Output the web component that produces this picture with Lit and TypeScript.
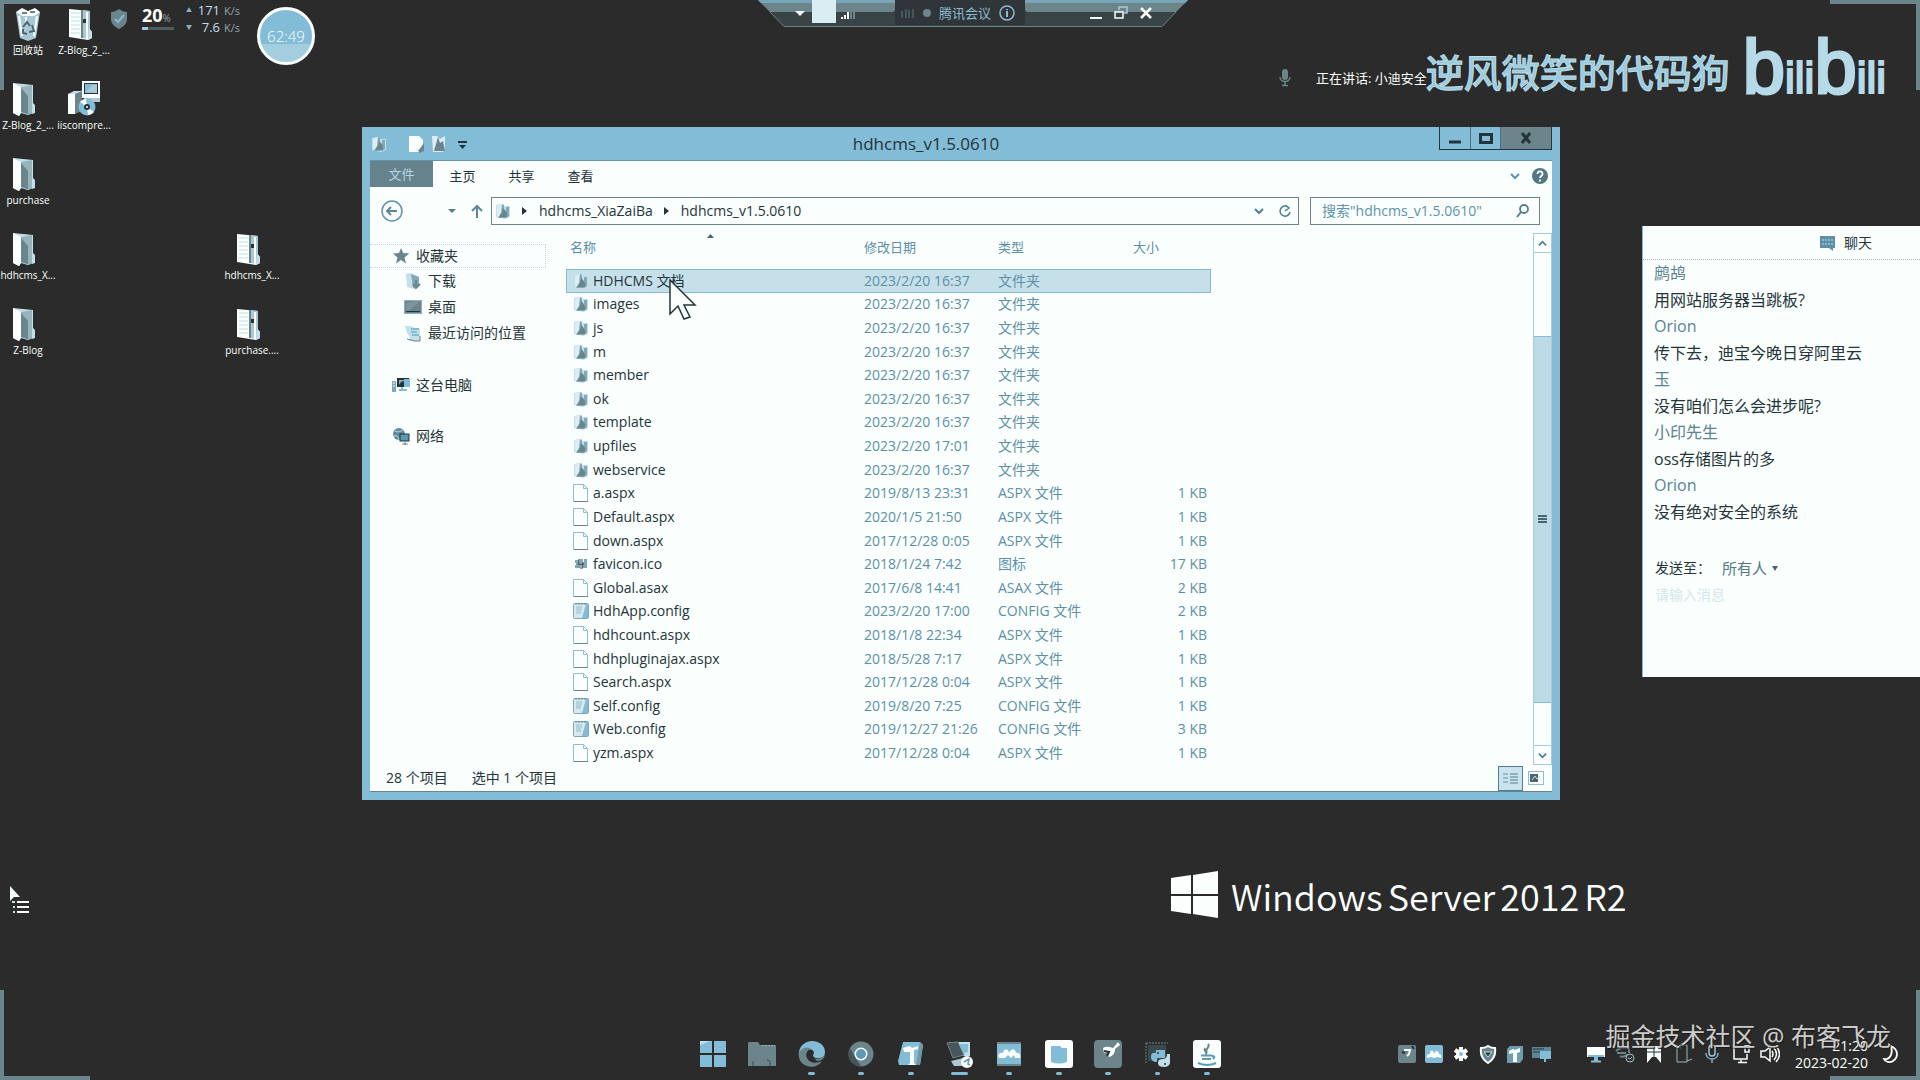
import { LitElement, html, css, svg, nothing } from "lit";
import { customElement } from "lit/decorators.js";
import { classMap } from "lit/directives/class-map.js";

const BLUE = "#82bcd6";
const SLATE = "#6b858a";
const PALE = "#fafffd";
const MIST = "#c3dfea";
const INK = "#24343a";

/* ---------- icons ---------- */

const frame = (w: number, h: number, vw: number, vh: number, body: unknown) =>
  html`<svg width=${w} height=${h} viewBox="0 0 ${vw} ${vh}" fill="none" aria-hidden="true">${body}</svg>`;

const bigFolder = () =>
  frame(32, 34, 32, 34, svg`
    <path d="M1 1 L21 3 V22 L23 24 V30 L16 33 L9 31 L7 34 L1 31 Z" fill="${MIST}"/>
    <path d="M1 1 L9 5 V31 L7 34 L1 31 Z" fill="${PALE}"/>
    <path d="M9 5 L20 3 V22 L23 24 V30 L16 33 L9 30 Z" fill="#96b4bb"/>
    <path d="M9 6 L16 14 V32 L9 30 Z" fill="${SLATE}"/>
    <path d="M20 20 l3 3 v8 l-3 1z" fill="${MIST}"/>`);

const zipFolder = () =>
  frame(32, 34, 32, 34, svg`
    <path d="M1 2 L22 4 V23 L24 25 V31 L20 33 L1 30 Z" fill="${PALE}"/>
    <path d="M3 6h9M3 10h9M3 14h9M3 18h9M3 22h9M3 26h9" stroke="${MIST}"/>
    <path d="M13 3 L22 4 V32 L13 31 Z" fill="#a9c8d2"/>
    <path d="M14 3v28" stroke="${SLATE}" stroke-width="2"/>
    <rect x="15" y="12" width="3" height="4" fill="${INK}"/>
    <path d="M19 5v27" stroke="${PALE}" stroke-width="2"/>
    <path d="M21 21 l3 4 v6 l-4 2z" fill="${MIST}"/>`);

const recycleBin = () =>
  frame(28, 34, 28, 34, svg`
    <path d="M2 5 L26 5 L22 31 L14 34 L6 31 Z" fill="#a7c9d6"/>
    <path d="M2 5 L8 1 L14 4 L21 1 L26 5 L20 9 L8 9 Z" fill="${PALE}"/>
    <path d="M5 9l3 20M23 9l-3 20M12 10v6" stroke="${PALE}" stroke-width="2"/>
    <path d="M9 20l4-5 3 4M18 18l2 6-5 1M13 27l-4-1 0-4" stroke="#4d666f" stroke-width="2"/>
    <path d="M8 6h5M16 5h5" stroke="${SLATE}" stroke-width="2"/>`);

const installer = () =>
  frame(34, 36, 34, 36, svg`
    <rect x="15" y="1" width="18" height="17" fill="${PALE}"/>
    <rect x="17" y="3" width="14" height="11" fill="${INK}"/>
    <rect x="18" y="4" width="12" height="9" fill="${BLUE}"/>
    <path d="M19 12l6-7h5v8z" fill="#a9cbd6"/>
    <path d="M17 18h16v4H17z" fill="#a9c8d2"/>
    <path d="M1 14h7v20H1z" fill="${PALE}"/><path d="M8 13l7-3v21l-7 3z" fill="${SLATE}"/>
    <path d="M1 14l6-3h8l-7 3z" fill="${MIST}"/>
    <circle cx="20" cy="27" r="8.500" fill="${BLUE}"/>
    <path d="M20 27L13 22a8 8 0 0 1 6-3zM20 27l7 5a8 8 0 0 1-6 3z" fill="${PALE}"/>
    <circle cx="20" cy="27" r="3" fill="${INK}"/><circle cx="20" cy="27" r="1" fill="${PALE}"/>`);

const folder = () =>
  frame(16, 16, 16, 16, svg`
    <path d="M1 2l5-1 3 2 6 0v11l-5 2-9-2z" fill="${MIST}"/>
    <path d="M2 3l5-2v8l-4 5-1-1z" fill="#dceef3"/>
    <path d="M7 1l2 1v4l2 2 0-4 3 0v9l-3 2H3l3-5z" fill="#7fa9b8"/>
    <path d="M8 5l4 5v4H4l3-4z" fill="${SLATE}"/>`);

const page = () =>
  frame(16, 18, 16, 18, svg`
    <path d="M.5.5h10l4 4v13H.5z" fill="${PALE}" stroke="#93bccb"/>
    <path d="M10.500 .5v4h4" stroke="#93bccb"/><path d="M1 17.500h14" stroke="${SLATE}"/>`);

const config = () =>
  frame(16, 18, 16, 18, svg`
    <rect x=".5" y="1.500" width="15" height="15" rx="1" fill="#d5e9ef" stroke="#7fa9b8"/>
    <path d="M9 16l4-14h2v14z" fill="${BLUE}"/>
    <path d="M3 5h6M3 7h6M3 9h5M3 11h5" stroke="#93bccb"/>
    <path d="M3 1v2M6 1v2M9 1v2M12 1v2" stroke="${SLATE}"/>`);

const ico = () =>
  frame(14, 12, 14, 12, svg`
    <path d="M1 2h4v3H1zM6 1h3v4H6zM10 1h3v9h-3zM1 7h3v3H1zM6 6h3v5H6z" fill="#7fa9b8"/>
    <path d="M2 6h8M5 1v9M9 4v6" stroke="${INK}"/>`);

const star = () =>
  frame(18, 18, 18, 18, svg`
    <path d="M9 1l2 5 6 .5-4.500 4 1.500 6L9 13l-5 3.500 1.500-6L1 6.500 7 6z" fill="${SLATE}"/>
    <path d="M9 1l2 5 6 .5-4 3z" fill="#5b98b4"/>`);

const download = () =>
  frame(18, 18, 18, 18, svg`
    <path d="M2 2l5-1 8 4v10l-5 2-7-2z" fill="${MIST}"/>
    <path d="M7 2l8 3v9l-6 2z" fill="#7fa9b8"/>
    <path d="M12 8v7M9 12l3 4 4-4" stroke="${SLATE}" stroke-width="2"/>`);

const desktopIcon = () =>
  frame(18, 16, 18, 16, svg`
    <rect x=".5" y="1.500" width="17" height="13" fill="${SLATE}" stroke="#8fb0b9"/>
    <path d="M2 4l10-2h4L4 13H2z" fill="#7b969c"/><path d="M2 12.500h14" stroke="${INK}"/>`);

const recent = () =>
  frame(18, 18, 18, 18, svg`
    <path d="M1 2h6l5 3 4 0v12H5l1-4-3-4z" fill="${MIST}"/>
    <path d="M7 5h8M7 8h6M8 11h7" stroke="${BLUE}" stroke-width="2"/>
    <path d="M3 15l8 2 5 0v-5" stroke="${SLATE}"/>`);

const computer = () =>
  frame(18, 16, 18, 16, svg`
    <rect x="0" y="4" width="4" height="11" fill="#7fa9b8"/><path d="M1 6h2M1 9h2" stroke="${PALE}"/>
    <rect x="5" y="1" width="12" height="9" fill="${INK}"/><path d="M7 8V3h8L9 5z" fill="#8fb0b9"/>
    <rect x="12" y="2" width="6" height="8" fill="${BLUE}"/><path d="M7 13h8M10 10v3" stroke="${BLUE}" stroke-width="2"/>`);

const network = () =>
  frame(18, 18, 18, 18, svg`
    <circle cx="7" cy="7" r="6" fill="#5f8c9d"/><path d="M3 4c3 2 6 0 8-1M2 9c3-1 5 1 5 4" stroke="${MIST}"/>
    <rect x="8" y="7" width="9" height="7" fill="#5b98b4" stroke="${INK}"/><path d="M13 14v4M10 17h6" stroke="${SLATE}"/>`);

const chevron = (w: number, up = false, colour = "#4f7f93") =>
  frame(w, w, 10, 10, svg`<path d=${up ? "M1 7l4-4 4 4" : "M1 3l4 4 4-4"} stroke=${colour} stroke-width="2"/>`);

const winLogo = () =>
  frame(48, 48, 48, 48, svg`
    <path d="M0 7l20-3v19H0zM22 4l25-4v23H22zM0 25h20v18L0 40zM22 25h25v22l-25-4z" fill="${PALE}"/>`);

const micSmall = () =>
  frame(12, 18, 12, 18, svg`
    <rect x="3" y="0" width="6" height="11" rx="3" fill="${SLATE}"/>
    <path d="M1 8c0 6 10 6 10 0M6 13v4M3 16.500h6" stroke="${SLATE}" stroke-width="1.500"/>`);

const shieldBadge = () =>
  frame(16, 20, 16, 20, svg`
    <path d="M8 0c3 2 5 3 8 3v7c0 5-4 8-8 10-4-2-8-5-8-10V3c3 0 5-1 8-3z" fill="${SLATE}"/>
    <path d="M4 10l3 3 6-7" stroke="${BLUE}" stroke-width="2"/>`);

/* taskbar */
const tb = (body: unknown) => frame(28, 28, 28, 28, body);
const taskIcons: { name: string; mark: number; art: unknown }[] = [
  { name: "开始", mark: 0, art: tb(svg`<path d="M1 1h12v12H1zM15 1h12v12H15zM1 15h12v12H1zM15 15h12v12H15z" fill="${BLUE}"/><path d="M1 1h10L1 5z" fill="${MIST}"/>`) },
  { name: "文件资源管理器", mark: 0, art: tb(svg`<path d="M0 3q0-1 1-1h9l2 3h15q1 0 1 1v20H0z" fill="${SLATE}"/><path d="M5 26v-5M22 26v-4q0-2-3-2" stroke="#3b494d"/><path d="M14 5.500h13" stroke="#a3b9bf" stroke-dasharray="2 1"/>`) },
  { name: "Edge", mark: 7, art: tb(svg`<path d="M14 1c8 0 13 5 13 11 0 5-4 7-9 6-4-1-3-3-2-5 0-3-4-5-8-3-4 2-4 8-1 12C2 20 0 15 1 12 2 5 8 1 14 1z" fill="${BLUE}"/><path d="M1 13c2-5 8-7 12-4-4 1-6 5-4 9 2 5 9 6 15 3-3 5-10 7-15 5C3 24 0 19 1 13z" fill="${SLATE}"/><path d="M16 18c4 2 9 1 11-5 0 5-3 8-8 8z" fill="${SLATE}"/>`) },
  { name: "Chrome", mark: 6, art: tb(svg`<circle cx="14" cy="14" r="12.500" fill="${SLATE}"/><path d="M3 8L9 19l5 7A12 12 0 0 1 3 8z" fill="#465559"/><circle cx="14" cy="14" r="6.500" fill="${PALE}"/><circle cx="14" cy="14" r="5" fill="#5d9ab6"/>`) },
  { name: "Typora", mark: 6, art: tb(svg`<path d="M6 2h17l3 3-3 20H2L1 21z" fill="${BLUE}"/><path d="M23 2l3 3-3 20h-4z" fill="#7397a3"/><path d="M6 8l6-2 2 1 1 1 6-2v3l-4 1v13l2 2h-8l2-2V12l-6 0z" fill="${PALE}"/>`) },
  { name: "远程桌面", mark: 17, art: tb(svg`<path d="M3 2l21 0v14H6z" fill="${MIST}"/><path d="M1 3l11-1 6 13-11 3z" fill="#46565b" stroke="${SLATE}"/><path d="M13 4h9v8l-5 1z" fill="${BLUE}"/><path d="M5 21l12-3 3 8H8z" fill="#a9c8d2"/><circle cx="21" cy="22" r="6" fill="${PALE}"/><path d="M18 22l5-3-1 5 2 1" stroke="#5d9ab6" stroke-width="1.500"/>`) },
  { name: "思维导图", mark: 6, art: tb(svg`<path d="M2 2h24v24H2z" fill="${BLUE}"/><path d="M2 2h24v2H2zM2 24h24v2H2z" fill="${SLATE}"/><path d="M4 18c-2-4 1-6 4-5 1-5 5-5 6 0 2-5 6-5 7 0 3-1 5 2 4 5l-5 0-1-3-3 3-3-3-3 3z" fill="${PALE}"/>`) },
  { name: "虚拟机", mark: 6, art: tb(svg`<rect width="28" height="28" rx="3" fill="${PALE}"/><path d="M6 6h9l2 2h5v14q-8 3-16 0z" fill="${BLUE}"/>`) },
  { name: "飞鸟", mark: 6, art: tb(svg`<rect width="28" height="28" rx="4" fill="${SLATE}"/><path d="M9 8c3-2 6-1 10 0l5-6 2 3-5 4c0 4-2 7-6 8l-2-2 3-3-6 1z" fill="${PALE}"/><path d="M10 11l5 1-2 4" stroke="${INK}" stroke-width="2"/>`) },
  { name: "Python", mark: 5, art: tb(svg`<path d="M2 3h22M2 3v20" stroke="${SLATE}" stroke-dasharray="2 1"/><path d="M4 5h18v16H4z" fill="#3c494d"/><path d="M12 10h9v8h-8v4q-6 0-6-5t5-4z" fill="${BLUE}"/><path d="M26 14v9q-1 4-6 4-6 0-6-4 0-4 5-4 4 0 4-5z" fill="${MIST}"/><circle cx="14" cy="13" r="1" fill="${INK}"/><circle cx="21" cy="24" r="1" fill="${INK}"/>`) },
  { name: "Java", mark: 6, art: tb(svg`<rect width="28" height="28" rx="3" fill="${PALE}"/><path d="M15 4c3 3-4 5-1 9M12 8c-2 3 3 4 1 7" stroke="${SLATE}" stroke-width="2"/><path d="M8 15.500h11M9 19h9M5 23q9 4 18 0M19 16q4 0 1 3" stroke="#5d9ab6" stroke-width="2"/>`) },
];

/* tray */
const tr = (body: unknown) => frame(20, 20, 20, 20, body);
const trayLeft: [string, unknown][] = [
  ["助手", tr(svg`<rect x="1" y="1" width="18" height="18" rx="2" fill="${SLATE}"/><path d="M7 6h6l-1 4-2 2" stroke="${PALE}" stroke-width="2"/><path d="M5 8l3 1M15 2l2 3" stroke="${INK}" stroke-width="2"/>`)],
  ["思维导图", tr(svg`<rect x="1" y="1" width="18" height="18" rx="2" fill="${BLUE}"/><path d="M3 14c-1-4 2-4 3-4 0-5 4-4 4 0 1-4 5-4 5 0 2 0 3 2 2 4l-4-1-3 1-3-1z" fill="${PALE}"/>`)],
  ["设置", tr(svg`<path d="M10 3v14M4 6l12 8M4 14l12-8" stroke="${PALE}" stroke-width="4"/><circle cx="10" cy="10" r="5" fill="${PALE}"/><circle cx="10" cy="10" r="2" fill="${BLUE}"/>`)],
  ["安全中心", tr(svg`<path d="M10 2c3 2 5 2 7 2 1 7-2 12-7 15C5 16 2 11 3 4c2 0 4 0 7-2z" fill="${SLATE}" stroke="${PALE}" stroke-width="2"/><path d="M6 8l4 5 4-5z" fill="${INK}" stroke="${MIST}"/>`)],
  ["Typora", tr(svg`<path d="M5 2h13v13l-3 4H2V5z" fill="#6f9dae"/><path d="M4 7l4-2 2 1 5-2v4l-3 1v9H8v-9l-4 1z" fill="${PALE}"/>`)],
  ["显示", tr(svg`<path d="M0 3h19v11H0z" fill="#5d8796"/><path d="M1 5h11M1 8h7" stroke="${INK}"/><path d="M9 8h9v6H9zM13 14v4" stroke="${BLUE}" fill="${BLUE}" stroke-width="2"/>`)],
];
const trayRight: [string, unknown][] = [
  ["投屏", tr(svg`<path d="M1 3h18v10H1z" fill="${PALE}"/><path d="M8 13h4v4H8z" fill="${BLUE}"/><path d="M5 17.500h10M2 12h16" stroke="${BLUE}" stroke-width="2"/>`)],
  ["同步", tr(svg`<path d="M1 7c5-5 9-3 13-3v5M2 9h9M5 12c3 2 5 0 7-1" stroke="${SLATE}" stroke-width="2"/><circle cx="15" cy="14" r="4" stroke="#a9c0c6"/><path d="M13 14l2 1 2-2" stroke="#a9c0c6"/>`)],
  ["书签", tr(svg`<path d="M3 2h14v17l-5-6h-4l-5 6z" fill="${PALE}"/><path d="M3 8h14M10 2v11" stroke="${INK}"/>`)],
  ["便签", tr(svg`<path d="M4 4l3-3h7v17H4zM14 17l5-2" stroke="#9fb9c0"/><path d="M7 2v3" stroke="${SLATE}"/>`)],
  ["麦克风", tr(svg`<rect x="7" y="1" width="6" height="11" rx="3" stroke="#9fc4d1" stroke-width="1.500"/><path d="M4 9c0 8 12 8 12 0M10 15v4" stroke="#7fb0c2" stroke-width="1.500"/>`)],
  ["网络", tr(svg`<path d="M12 3H3v12h13v-5M7 18.500h9M10 16v2M14 2h4v6h-4z" stroke="${PALE}" stroke-width="1.500"/>`)],
  ["音量", tr(svg`<path d="M1 7h4l5-4v14l-5-4H1zM12 7q2 3 0 6M14 4q5 6 0 12M16 2q7 8 0 16" stroke="${PALE}" stroke-width="1.500"/>`)],
];

/* ---------- data ---------- */

type Kind = "folder" | "page" | "config" | "ico";
const D = "文件夹", A = "ASPX 文件", C = "CONFIG 文件";
const files: [Kind, string, string, string, string][] = [
  ["folder", "HDHCMS 文档", "2023/2/20 16:37", D, ""],
  ["folder", "images", "2023/2/20 16:37", D, ""],
  ["folder", "js", "2023/2/20 16:37", D, ""],
  ["folder", "m", "2023/2/20 16:37", D, ""],
  ["folder", "member", "2023/2/20 16:37", D, ""],
  ["folder", "ok", "2023/2/20 16:37", D, ""],
  ["folder", "template", "2023/2/20 16:37", D, ""],
  ["folder", "upfiles", "2023/2/20 17:01", D, ""],
  ["folder", "webservice", "2023/2/20 16:37", D, ""],
  ["page", "a.aspx", "2019/8/13 23:31", A, "1 KB"],
  ["page", "Default.aspx", "2020/1/5 21:50", A, "1 KB"],
  ["page", "down.aspx", "2017/12/28 0:05", A, "1 KB"],
  ["ico", "favicon.ico", "2018/1/24 7:42", "图标", "17 KB"],
  ["page", "Global.asax", "2017/6/8 14:41", "ASAX 文件", "2 KB"],
  ["config", "HdhApp.config", "2023/2/20 17:00", C, "2 KB"],
  ["page", "hdhcount.aspx", "2018/1/8 22:34", A, "1 KB"],
  ["page", "hdhpluginajax.aspx", "2018/5/28 7:17", A, "1 KB"],
  ["page", "Search.aspx", "2017/12/28 0:04", A, "1 KB"],
  ["config", "Self.config", "2019/8/20 7:25", C, "1 KB"],
  ["config", "Web.config", "2019/12/27 21:26", C, "3 KB"],
  ["page", "yzm.aspx", "2017/12/28 0:04", A, "1 KB"],
];
const kindIcon = { folder, page, config, ico };

const chat: [string, string][] = [
  ["鹧鸪", "用网站服务器当跳板?"],
  ["Orion", "传下去，迪宝今晚日穿阿里云"],
  ["玉", "没有咱们怎么会进步呢?"],
  ["小印先生", "oss存储图片的多"],
  ["Orion", "没有绝对安全的系统"],
];

const base = css`
  * { box-sizing: border-box; }
  svg { display: block; flex: none; }
  button, input, select, textarea {
    font: inherit; color: inherit; background: none; border: 0; padding: 0; margin: 0;
    border-radius: 0; outline: 0; appearance: none;
  }
  button { display: flex; align-items: center; justify-content: center; }
  a { color: inherit; text-decoration: none; }
  ul, p, h1, h2 { margin: 0; padding: 0; list-style: none; font-weight: 400; }
`;

/* ---------- file explorer window ---------- */

@customElement("file-explorer")
class FileExplorer extends LitElement {
  static styles = [base, css`
    :host {
      display: flex; flex-direction: column; background: #82bcd6; padding: 0 8px 8px;
      font-size: 14px; line-height: 20px; color: #24343a;
    }
    .title { display: grid; grid-template-columns: 1fr auto 1fr; align-items: center; height: 34px; border-bottom: 1px solid #6b95a5; }
    .quick { display: flex; align-items: center; gap: 7px; padding-left: 1px; }
    .quick .new { margin-left: 14px; }
    .title h1 { font-size: 17px; line-height: 24px; color: #24343a; padding-right: 70px; }
    .caption { display: flex; justify-self: end; align-self: start; height: 23px; border: 1px solid #24343a; border-top: 0; }
    .caption button { width: 30px; }
    .caption button + button { border-left: 1px solid #4f7080; }
    .caption .close { width: 51px; background: #6b858a; }
    .content { flex: 1; display: flex; flex-direction: column; background: #fafffd; min-height: 0; border-bottom: 1px solid #6b858a; }
    .tabs { display: flex; align-items: center; height: 29px; font-size: 13px; }
    .tabs button { height: 28px; width: 59px; }
    .tabs .file { width: 63px; height: 26px; align-self: start; background: #65838d; color: #b4d7e4; }
    .tabs .fold { width: 24px; margin-left: auto; }
    .tabs .help { width: 25px; }
    .bar { display: flex; align-items: center; height: 41px; padding: 0 12px 0 11px; }
    .bar .hist { width: 14px; margin-left: 42px; }
    .bar .up { width: 16px; margin: 0 6px 0 10px; }
    .path { flex: 1; display: flex; align-items: center; gap: 11px; height: 28px; border: 1px solid #6b858a; padding: 0 6px 0 3px; }
    .path .end { margin-left: auto; width: 16px; }
    .search { display: flex; align-items: center; width: 230px; height: 28px; margin-left: 11px; border: 1px solid #6b858a; padding: 0 9px 0 11px; }
    .search input { flex: 1; min-width: 0; }
    .search input::placeholder { color: #5d93ac; opacity: 1; }
    .body { flex: 1; display: flex; min-height: 0; }
    .side { width: 196px; padding: 13px 20px 0 0; }
    .side a { display: flex; align-items: center; gap: 6px; height: 26px; padding-left: 22px; white-space: nowrap; }
    .side .sub a { padding-left: 34px; }
    .side .fav { height: 24px; border: 1px dotted #b9d7e2; border-left: 0; }
    .side .group { margin-top: 26px; }
    .side .group + .group { margin-top: 25px; }
    .list { flex: 1; display: flex; align-items: start; }
    table { border-collapse: collapse; table-layout: fixed; width: 645px; height: 100%; color: #5d8fa6; }
    th { font-weight: 400; font-size: 13px; text-align: left; padding: 0 0 6px; height: 38px; }
    th.name { padding-left: 4px; position: relative; }
    td { padding: 0; white-space: nowrap; line-height: 20px; }
    td.name { color: #24343a; padding-left: 7px; }
    .cell { display: flex; align-items: center; gap: 4px; }
    .cell .pic { display: flex; width: 16px; justify-content: center; }
    td.size { text-align: right; padding-right: 4px; }
    tr.on { background: #c6e0ea; outline: 1px solid #82bcd6; outline-offset: -1px; }
    .c1 { width: 298px; } .c2 { width: 134px; } .c3 { width: 135px; }
    .sort { position: absolute; left: 141px; top: 3px; }
    .scroll { display: flex; flex-direction: column; width: 19px; margin: 2px 0 0; border: 1px solid #a6cddd; }
    .scroll button { height: 18px; }
    .track { flex: 1; display: flex; flex-direction: column; padding: 83px 0 42px; border: solid #a6cddd; border-width: 1px 0; }
    .thumb { flex: 1; display: flex; align-items: center; justify-content: center; background: #bcdbe7; border: solid #82bcd6; border-width: 1px 0; }
    .status { display: flex; align-items: center; gap: 24px; height: 26px; padding: 0 8px 0 16px; }
    .views { display: flex; align-items: center; gap: 5px; margin-left: auto; }
    .views .on { width: 25px; height: 25px; border: 1px solid #4f7f93; background: #cbe3ec; }
  `];

  render() {
    return html`
      <header class="title">
        <div class="quick">
          ${folder()}
          <button class="new" aria-label="属性">${frame(16, 18, 16, 18, svg`<path d="M1 1h10l4 4v12H1z" fill="${PALE}"/><path d="M7 12l3 4 6-8v8l-4 2z" fill="${SLATE}"/>`)}</button>
          <button aria-label="新建文件夹">${frame(16, 18, 16, 18, svg`<path d="M1 1l5 0 3 3 5-3v15l-4 1H2z" fill="#dceef3"/><path d="M7 2l2 6 3-2 2 10H3z" fill="${SLATE}"/>`)}</button>
          <button aria-label="自定义">${frame(16, 12, 16, 12, svg`<path d="M4 4h9" stroke="${INK}" stroke-width="2"/><path d="M5 7h7L8.500 11z" fill="${INK}"/>`)}</button>
        </div>
        <h1>hdhcms_v1.5.0610</h1>
        <div class="caption">
          <button aria-label="最小化">${frame(14, 12, 14, 12, svg`<path d="M1 10h12" stroke="${INK}" stroke-width="3"/>`)}</button>
          <button aria-label="最大化">${frame(14, 12, 14, 12, svg`<rect x="1.500" y="2.500" width="11" height="8" stroke="${INK}" stroke-width="3"/>`)}</button>
          <button class="close" aria-label="关闭">${frame(12, 12, 12, 12, svg`<path d="M2 1l8 10M10 1L2 11" stroke="${INK}" stroke-width="3"/>`)}</button>
        </div>
      </header>
      <div class="content">
        <nav class="tabs">
          <button class="file">文件</button><button>主页</button><button>共享</button><button>查看</button>
          <button class="fold" aria-label="展开功能区">${chevron(10, false, "#5d93ac")}</button>
          <button class="help" aria-label="帮助">${frame(16, 16, 16, 16, svg`<circle cx="8" cy="8" r="8" fill="#557784"/><path d="M5.500 6c0-4 5-3 5 0 0 2-2.500 2-2.500 4M8 11.500v2" stroke="${PALE}" stroke-width="1.800"/>`)}</button>
        </nav>
        <div class="bar">
          <button aria-label="后退">${frame(22, 22, 22, 22, svg`<circle cx="11" cy="11" r="10" stroke="#5d93ac" stroke-width="1.500"/><path d="M16 11H7M10 7l-4 4 4 4" stroke="#5d8796" stroke-width="2"/>`)}</button>
          <button class="hist" aria-label="最近位置">${frame(8, 6, 8, 6, svg`<path d="M0 1h8L4 5z" fill="#4f7f93"/>`)}</button>
          <button class="up" aria-label="上移">${frame(12, 14, 12, 14, svg`<path d="M6 14V2M1 7l5-5 5 5" stroke="#5d8796" stroke-width="2"/>`)}</button>
          <div class="path">
            ${folder()}
            ${frame(6, 8, 6, 8, svg`<path d="M0 0v8l5-4z" fill="${INK}"/>`)}
            <a href="#p">hdhcms_XiaZaiBa</a>
            ${frame(6, 8, 6, 8, svg`<path d="M0 0v8l5-4z" fill="${INK}"/>`)}
            <a href="#c">hdhcms_v1.5.0610</a>
            <button class="end" aria-label="历史记录">${chevron(10)}</button>
            <button aria-label="刷新">${frame(14, 14, 14, 14, svg`<path d="M11 4a5 5 0 1 0 1 4M7 1l4 3-4 3" stroke="#4f7f93" stroke-width="1.500"/>`)}</button>
          </div>
          <label class="search">
            <input type="search" aria-label="搜索" placeholder='搜索"hdhcms_v1.5.0610"' />
            ${frame(14, 14, 14, 14, svg`<circle cx="8" cy="5" r="4" stroke="#4f7f93" stroke-width="1.800"/><path d="M5 8l-4 5" stroke="#4f7f93" stroke-width="2"/>`)}
          </label>
        </div>
        <div class="body">
          <nav class="side">
            <a class="fav" href="#fav">${star()}收藏夹</a>
            <div class="sub">
              <a href="#dl">${download()}下载</a>
              <a href="#dt">${desktopIcon()}桌面</a>
              <a href="#rc">${recent()}最近访问的位置</a>
            </div>
            <a class="group" href="#pc">${computer()}这台电脑</a>
            <a class="group" href="#nt">${network()}网络</a>
          </nav>
          <div class="list">
            <table>
              <colgroup><col class="c1" /><col class="c2" /><col class="c3" /><col /></colgroup>
              <thead>
                <tr>
                  <th class="name" aria-sort="ascending">名称<span class="sort">${frame(7, 4, 7, 4, svg`<path d="M0 4l3.500-4L7 4z" fill="#4a656e"/>`)}</span></th>
                  <th>修改日期</th><th>类型</th><th>大小</th>
                </tr>
              </thead>
              <tbody>
                ${files.map(([kind, name, date, type, size], i) => html`
                  <tr class=${classMap({ on: i === 0 })}>
                    <td class="name"><span class="cell"><span class="pic">${kindIcon[kind]()}</span>${name}</span></td>
                    <td>${date}</td><td>${type}</td><td class="size">${size}</td>
                  </tr>`)}
              </tbody>
            </table>
          </div>
          <div class="scroll">
            <button aria-label="向上滚动">${chevron(9, true)}</button>
            <div class="track"><div class="thumb">${frame(9, 9, 9, 9, svg`<path d="M0 1h9M0 4h9M0 7h9" stroke="#4a656e" stroke-width="2"/>`)}</div></div>
            <button aria-label="向下滚动">${chevron(9)}</button>
          </div>
        </div>
        <footer class="status">
          <span>28 个项目</span><span>选中 1 个项目</span>
          <div class="views">
            <button class="on" aria-label="详细信息">${frame(15, 15, 15, 15, svg`<path d="M0 3h5M0 7h5M0 11h5" stroke="#93bccb" stroke-width="2"/><path d="M7 3h8M7 6h8M7 9h8M7 12h8" stroke="#4f7f93"/>`)}</button>
            <button aria-label="缩略图">${frame(16, 14, 16, 14, svg`<rect x=".5" y=".5" width="15" height="13" stroke="#93bccb"/><path d="M2 3h8v8H2z" fill="#4a656e"/><path d="M4 9l3-4 2 3 3-3" stroke="${MIST}"/>`)}</button>
          </div>
        </footer>
      </div>`;
  }
}

/* ---------- meeting chat ---------- */

@customElement("chat-panel")
class ChatPanel extends LitElement {
  static styles = [base, css`
    :host { display: flex; flex-direction: column; background: #fafffd; border-left: 1px solid #82bcd6; color: #24343a; font-size: 16px; line-height: 26px; }
    header { display: flex; align-items: center; justify-content: flex-end; gap: 8px; height: 34px; padding-right: 48px; border-bottom: 1px dotted #a3b9bf; }
    header h2 { font-size: 14px; line-height: 20px; }
    .log { display: grid; grid-auto-rows: 27px 26px; padding: 0 11px 30px; }
    .who { color: #5a8291; font-size: 16px; }
    .to { display: flex; align-items: center; gap: 11px; padding: 0 12px; font-size: 14px; }
    .pick { display: flex; align-items: center; gap: 4px; color: #557784; font-size: 15px; }
    textarea { resize: none; margin: 2px 12px 0; height: 92px; font-size: 14px; line-height: 24px; }
    textarea::placeholder { color: #d4e6ec; opacity: 1; }
  `];

  render() {
    return html`
      <header>
        ${frame(16, 16, 16, 16, svg`<path d="M0 1h15v12h-2v3l-4-3H0z" fill="#5d8fa6"/><path d="M2 5h11M2 9h11" stroke="${MIST}" stroke-dasharray="2 1"/>`)}
        <h2>聊天</h2>
      </header>
      <div class="log">
        ${chat.map(([who, text]) => html`<span class="who">${who}</span><span>${text}</span>`)}
      </div>
      <div class="to">
        <label for="to">发送至：</label>
        <span class="pick">
          <select id="to"><option>所有人</option></select>
          ${frame(6, 5, 6, 5, svg`<path d="M0 0h6L3 5z" fill="#4a656e"/>`)}
        </span>
      </div>
      <textarea aria-label="消息" placeholder="请输入消息"></textarea>`;
  }
}

/* ---------- desktop ---------- */

type Shortcut = [() => unknown, string] | null;
const columns: { cls: string; items: Shortcut[] }[] = [
  { cls: "col-a", items: [[recycleBin, "回收站"], [bigFolder, "Z-Blog_2_..."], [bigFolder, "purchase"], [bigFolder, "hdhcms_X..."], [bigFolder, "Z-Blog"]] },
  { cls: "col-b", items: [[zipFolder, "Z-Blog_2_..."], [installer, "iiscompre..."]] },
  { cls: "col-c", items: [null, null, null, [zipFolder, "hdhcms_X..."], [zipFolder, "purchase...."]] },
];

@customElement("app-root")
class AppRoot extends LitElement {
  static styles = [base, css`
    :host {
      display: flex; flex-direction: column; position: relative; min-height: 100vh; overflow: hidden;
      background: #2b2b2b; color: #fafffd;
      font-family: "Open Sans", "Noto Sans CJK SC", sans-serif;
    }
    .desk { flex: 1; }
    .corner { position: absolute; width: 90px; height: 90px; border: 0 solid #6b858a; pointer-events: none; }
    .tl { left: 0; top: 0; border-width: 4px 0 0 4px; }
    .tr { right: 0; top: 0; border-width: 4px 4px 0 0; }
    .bl { left: 0; bottom: 0; border-width: 0 0 4px 4px; }
    .br { right: 0; bottom: 0; border-width: 0 4px 4px 0; }
    .icons { position: absolute; top: 6px; display: grid; grid-auto-rows: 75px; width: 56px; }
    .icons a { display: flex; flex-direction: column; align-items: center; font-size: 10px; line-height: 18px; white-space: nowrap; }
    .icons .pic { display: flex; align-items: flex-end; height: 35px; }
    .col-a { left: 0; } .col-b { left: 56px; } .col-c { left: 224px; }
    .monitor { position: absolute; left: 111px; top: 2px; display: flex; align-items: flex-start; font-size: 12px; line-height: 17px; }
    .monitor .guard { padding-top: 7px; }
    .cpu { margin-left: 15px; width: 32px; padding-top: 2px; }
    .cpu b { font-size: 18px; line-height: 22px; }
    .cpu small { font-size: 10px; color: #8ea5ab; }
    .meter { height: 3px; background: linear-gradient(90deg, #a6cddd 20%, #4c5c60 20%); }
    .net { margin-left: 12px; display: grid; grid-template-columns: auto 26px 18px; column-gap: 2px; text-align: right; font-size: 13px; color: #c3dfea; }
    .net i { font-style: normal; font-size: 6px; color: #8fb0b9; }
    .net span { font-size: 11px; color: #8ea5ab; }
    .ball { position: absolute; left: 257px; top: 7px; width: 58px; height: 58px; border-radius: 50%; border: 3px solid #fafffd; background: linear-gradient(#82bcd6 66%, #a3cee0 66%); display: flex; align-items: center; justify-content: center; font-weight: 300; font-size: 15px; }
    .meeting { position: absolute; left: 758px; top: 0; width: 430px; height: 28px; }
    .meeting > svg { position: absolute; left: 0; top: 0; }
    .meeting .row { position: relative; display: flex; align-items: center; height: 25px; padding: 0 36px 0 36px; font-size: 13px; color: #8ebbcd; }
    .meeting .box { width: 24px; height: 23px; align-self: start; background: #d9edf3; margin: 0 5px 0 6px; }
    .meeting .mid { display: flex; align-items: center; gap: 8px; margin-left: 45px; }
    .meeting .ctl { display: flex; gap: 12px; margin-left: auto; }
    .speaking { position: absolute; left: 1279px; top: 68px; display: flex; align-items: center; gap: 25px; font-size: 13px; line-height: 20px; }
    .brand { position: absolute; right: 34px; top: 30px; display: flex; align-items: center; gap: 13px; }
    .brand h1 { font-size: 38px; line-height: 84px; font-weight: 500; color: #9bcadd; -webkit-text-stroke: 1px #b9deea; }
    .bili { font-family: "Liberation Sans", sans-serif; font-size: 44px; line-height: 66px; color: #b6dae7; -webkit-text-stroke: 2px #b6dae7; display: flex; align-items: baseline; }
    .bili b { font-size: 76px; line-height: 66px; font-weight: 400; -webkit-text-stroke: 3px #b6dae7; }
    .server { position: absolute; left: 1171px; top: 867px; display: flex; align-items: center; gap: 12px; font-family: "Noto Sans CJK SC", sans-serif; font-size: 36px; line-height: 56px; font-weight: 350; white-space: nowrap; }
    .words { display: flex; gap: 5px; }
    file-explorer { position: absolute; left: 362px; top: 127px; width: 1198px; height: 673px; }
    chat-panel { position: absolute; right: 0; top: 226px; width: 278px; min-height: 451px; }
    .pointer { position: absolute; left: 669px; top: 278px; }
    .pointer-b { position: absolute; left: 9px; top: 885px; }
    .taskbar { display: grid; grid-template-columns: 1fr 522px 1fr; align-items: center; height: 52px; }
    .apps { grid-column: 2; display: flex; justify-content: space-between; padding-top: 10px; }
    .apps button { flex-direction: column; justify-content: flex-start; width: 28px; height: 38px; gap: 4px; }
    .mark { height: 3px; border-radius: 2px; background: #82bcd6; }
    .tray { display: flex; align-items: center; justify-content: flex-end; padding-right: 20px; }
    .tray .grp { display: flex; gap: 7px; }
    .tray .grp + .grp { gap: 9px; margin-left: 34px; }
    .clock { margin: 0 14px 0 15px; text-align: right; font-size: 14px; line-height: 17px; }
    .mark-text { position: absolute; right: 29px; bottom: 25px; font-size: 25px; line-height: 38px; color: #cccccc; text-shadow: 1px 1px 1px #1a1a1a; white-space: nowrap; }
  `];

  render() {
    return html`
      <main class="desk">
        <i class="corner tl"></i><i class="corner tr"></i><i class="corner bl"></i><i class="corner br"></i>

        ${columns.map((c) => html`<nav class="icons ${c.cls}">
          ${c.items.map((it) => it ? html`<a href="#open"><span class="pic">${it[0]()}</span>${it[1]}</a>` : html`<span></span>`)}
        </nav>`)}

        <section class="monitor">
          <span class="guard">${shieldBadge()}</span>
          <div class="cpu"><b>20</b><small>%</small><div class="meter"></div></div>
          <div class="net"><i>▲</i>171<span>K/s</span><i>▼</i>7.6<span>K/s</span></div>
        </section>
        <div class="ball">62:49</div>

        <section class="meeting">
          ${frame(430, 28, 430, 28, svg`
            <path d="M0 0H430L404 26.500H26z" fill="#3a4346"/>
            <path d="M0 0H137V9q0 3-3 3H12zM267 0H430L418 12H270q-3 0-3-3z" fill="${SLATE}"/>
            <path d="M0 0H137V3H3zM267 0H430L427 3H267z" fill="#78a6b8"/>
            <path d="M137 0H267V25H137z" fill="#2f3538"/>
            <path d="M12 12L26 26.500H404L418 12" stroke="${SLATE}"/>`)}
          <div class="row">
            ${frame(12, 8, 12, 8, svg`<path d="M1 2h10L6 7z" fill="${PALE}"/>`)}
            <span class="box"></span>
            ${frame(15, 12, 15, 12, svg`<path d="M1 10v2M4 8v4M7 5v7" stroke="${PALE}" stroke-width="2"/><path d="M10 3v9M13 0v12" stroke="${SLATE}" stroke-width="2"/>`)}
            <span class="mid">
              ${frame(14, 10, 14, 10, svg`<path d="M1 3v7M5 1v9M8 2v8M12 1v9" stroke="#4f6368" stroke-width="1.500"/>`)}
              ${frame(8, 8, 8, 8, svg`<circle cx="4" cy="4" r="4" fill="${SLATE}"/>`)}
              <span>腾讯会议</span>
              ${frame(16, 16, 16, 16, svg`<circle cx="8" cy="8" r="7" stroke="#8ebbcd" stroke-width="1.500"/><path d="M8 4v1M7 7h1v5" stroke="#8ebbcd" stroke-width="2"/>`)}
            </span>
            <span class="ctl">
              <button aria-label="最小化">${frame(12, 14, 12, 14, svg`<path d="M0 12h12" stroke="${PALE}" stroke-width="2"/>`)}</button>
              <button aria-label="还原">${frame(14, 14, 14, 14, svg`<path d="M5 4V1h8v6h-3" stroke="#a9cbd6" stroke-width="1.500"/><rect x="1" y="6" width="8" height="6" stroke="${PALE}" stroke-width="1.500"/>`)}</button>
              <button aria-label="关闭">${frame(12, 14, 12, 14, svg`<path d="M1 2l10 10M11 2L1 12" stroke="${PALE}" stroke-width="2.500"/>`)}</button>
            </span>
          </div>
        </section>

        <p class="speaking">${micSmall()}<span>正在讲话: 小迪安全</span></p>
        <div class="brand"><h1>逆风微笑的代码狗</h1><span class="bili"><b>b</b>ili<b>b</b>ili</span></div>
        <div class="server">${winLogo()}<span class="words"><span>Windows</span> <span>Server</span> <span>2012</span> <span>R2</span></span></div>

        <file-explorer></file-explorer>
        <chat-panel></chat-panel>

        <span class="pointer">${frame(28, 42, 28, 42, svg`<path d="M1 2v34l8-8 6 13 6-2-6-12h11z" fill="${PALE}" stroke="${INK}" stroke-width="1.500"/>`)}</span>
        <span class="pointer-b">${frame(22, 32, 22, 32, svg`<path d="M1 1v15l4-4h6z" fill="${PALE}"/><path d="M8 17h12M8 22h12M8 27h12" stroke="${PALE}" stroke-width="2"/><path d="M3 17h3M4 22h2M4 27h2" stroke="${MIST}" stroke-width="2"/>`)}</span>
      </main>

      <footer class="taskbar">
        <nav class="apps">
          ${taskIcons.map((t) => html`<button aria-label=${t.name}>${t.art}${t.mark ? html`<span class="mark" style="width:${t.mark}px"></span>` : nothing}</button>`)}
        </nav>
        <div class="tray">
          <span class="grp">${trayLeft.map(([n, a]) => html`<button aria-label=${n}>${a}</button>`)}</span>
          <span class="grp">${trayRight.map(([n, a]) => html`<button aria-label=${n}>${a}</button>`)}</span>
          <time class="clock">21:20<br />2023-02-20</time>
          <button aria-label="专注助手">${frame(18, 20, 18, 20, svg`<path d="M9 2c7 3 8 11 2 15-3 2-8 1-9-2 7 1 9-7 7-13z" stroke="${PALE}" stroke-width="1.800"/>`)}</button>
        </div>
      </footer>
      <div class="mark-text">掘金技术社区 @ 布客飞龙</div>`;
  }
}
